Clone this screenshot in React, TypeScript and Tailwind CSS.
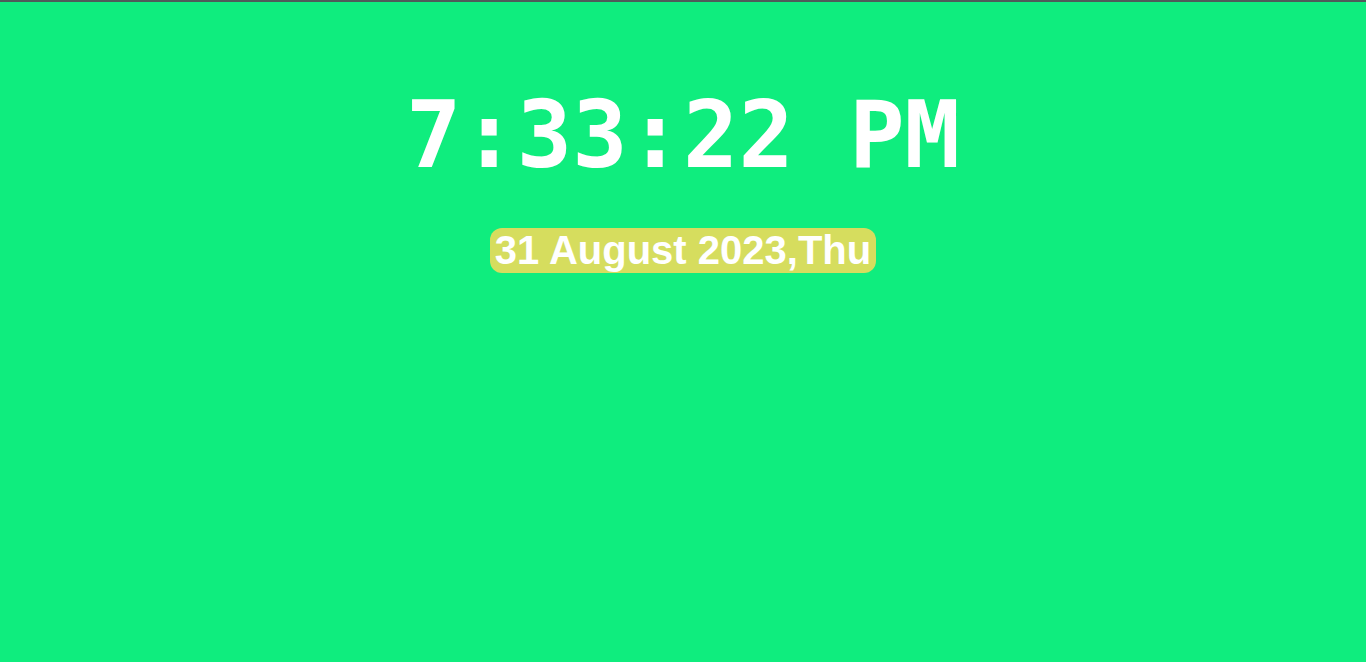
export default function App() {
  return (
    <div className="min-h-[662px] w-full bg-[#0fed7e] border-t-2 border-[#4f5b5a] flex flex-col items-center">
      {/* Time */}
      <div className="mt-[80px] text-white font-bold text-[92px] leading-[normal] font-['DejaVu_Sans_Mono',monospace]">
        7:33:22 PM
      </div>

      {/* Date */}
      <div className="mt-[39px] bg-[#d6dd5e] rounded-[12px] px-[5px] text-white font-bold text-[40px] leading-[normal] font-['Liberation_Sans',Arial,sans-serif]">
        31 August 2023,Thu
      </div>
    </div>
  );
}
